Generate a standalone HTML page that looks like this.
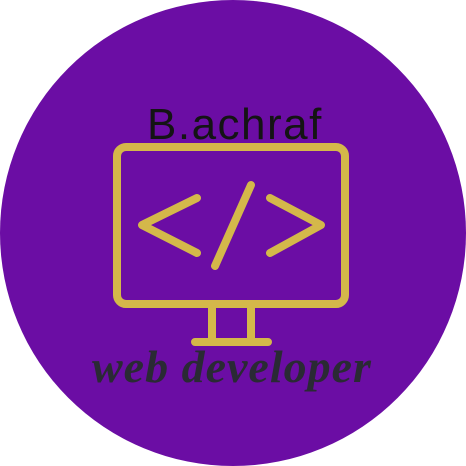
<html><body style="margin:0;width:466px;height:466px;background:#fff;overflow:hidden">
<div style="position:absolute;left:0;top:0;width:466px;height:466px;border-radius:50%;background:#6b0da4"></div>
<div style="position:absolute;left:147px;top:100px;width:200px;font:44px 'Liberation Sans',sans-serif;color:#141414;letter-spacing:1.5px">B.achraf</div>
<svg width="466" height="466" style="position:absolute;left:0;top:0" fill="none" stroke="#d4b84a" stroke-width="8" stroke-linecap="round" stroke-linejoin="round">
<rect x="117" y="147" width="228" height="157" rx="9"/>
<path d="M212 308V340M251 308V340M195 342H268"/>
<path d="M197 198L142 225L197 253M251 185L215 266M270 198L321 225L270 253"/>
</svg>
<div style="position:absolute;left:92px;top:340px;width:320px;font:italic bold 46px 'Liberation Serif',serif;color:#2a2a34;letter-spacing:1px">web developer</div>
</body></html>
